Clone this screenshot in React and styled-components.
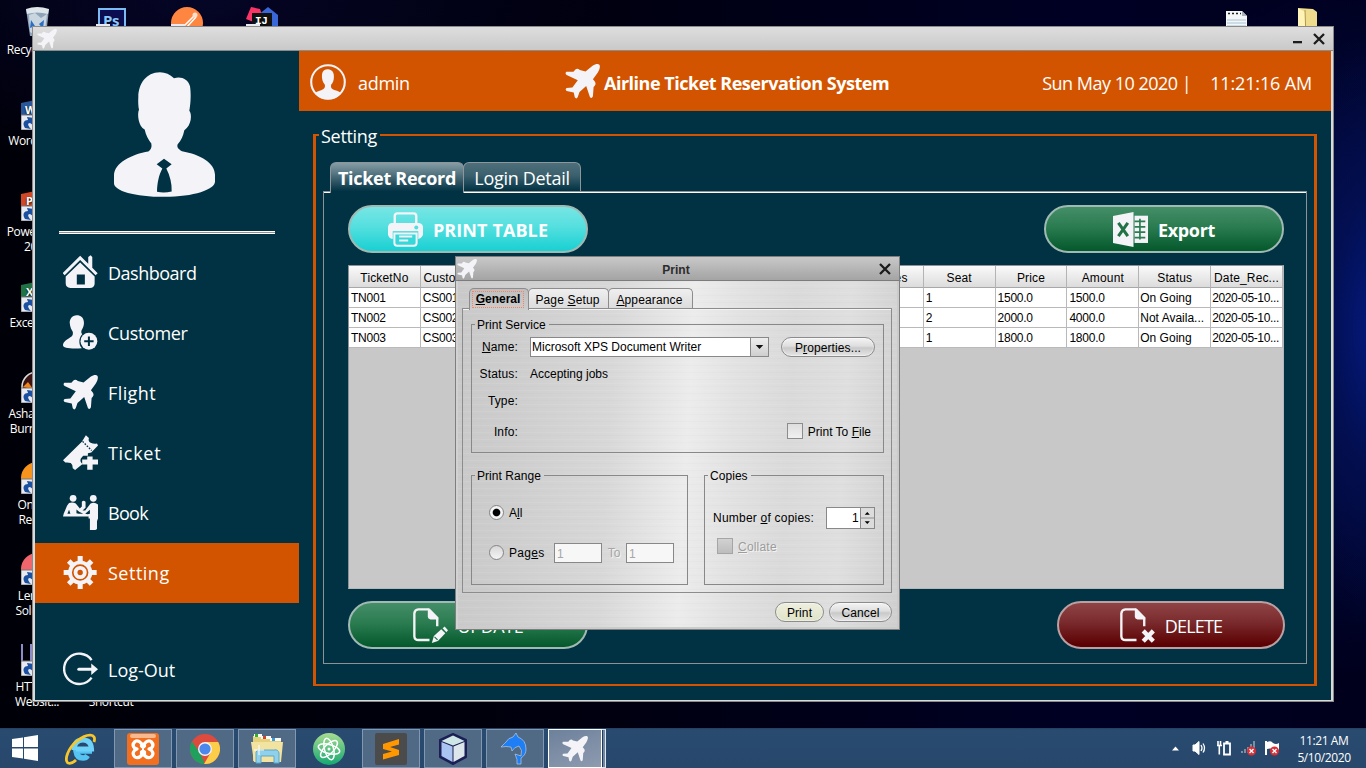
import React from 'react';
import styled, { createGlobalStyle, css } from 'styled-components';

const navy = '#003243';
const orange = '#d35400';
const ink = '#f4f4f8';
const ui = '"Open Sans", "Noto Sans", sans-serif';
const swing = '"Liberation Sans", Arial, sans-serif';

const Global = createGlobalStyle`
  * { box-sizing: border-box; }
  body { margin: 0; overflow: hidden; background: #000; }
  svg { display: block; flex: none; }
`;

/* ---------- desktop ---------- */

const Desktop = styled.main`
  position: relative;
  width: 1366px;
  height: 768px;
  display: flex;
  flex-direction: column;
  justify-content: flex-end;
  overflow: hidden;
  font-family: ${ui};
  background:
    radial-gradient(ellipse 90px 300px at 1372px 330px, #04187a 0%, rgba(3, 18, 90, 0.6) 45%, transparent 100%),
    radial-gradient(ellipse 260px 360px at 1366px 320px, #020e52 0%, transparent 100%),
    radial-gradient(ellipse 420px 170px at 200px 0, #050526 0%, transparent 100%),
    linear-gradient(90deg, #000008 0%, #00000e 40%, #000025 80%, #00001c 100%);
`;

const Shortcut = styled.div`
  position: absolute;
  left: ${p => p.$x}px;
  top: ${p => p.$y}px;
  width: 76px;
  display: flex;
  flex-direction: column;
  align-items: center;
  color: #fff;
  font-size: 12px;
  line-height: 15px;
  letter-spacing: -0.4px;
  text-align: center;
  white-space: pre-line;
  text-shadow: 0 1px 2px #000;
`;

const ShortcutArt = styled.svg`
  width: 32px;
  height: 32px;
  margin-bottom: ${p => p.$gap ?? 3}px;
`;

/* ---------- application window ---------- */

const AppWindow = styled.section`
  position: absolute;
  left: 32px;
  top: 26px;
  width: 1302px;
  height: 676px;
  display: flex;
  flex-direction: column;
  border: 1px solid #8b8b8b;
  background: #dadada;
  padding: 0 2px 2px;
`;

const TitleBar = styled.header`
  height: 24px;
  flex: none;
  box-sizing: content-box;
  height: 23px;
  display: flex;
  align-items: center;
  margin: 0 -2px;
  padding: 0 7px 0 4px;
  border-bottom: 1px solid #8a8a8a;
  background: linear-gradient(#dedede, #c9c9c9);
`;

const TitleControls = styled.div`
  display: flex;
  gap: 10px;
  margin-left: auto;
`;

const WindowBody = styled.div`
  flex: 1;
  display: flex;
  background: ${navy};
`;

const Sidebar = styled.aside`
  width: 264px;
  flex: none;
  display: flex;
  flex-direction: column;
  align-items: center;
`;

const Avatar = styled.svg`
  width: 101px;
  height: 125px;
  margin: 21px 5px 0 0;
`;

const DoubleRule = styled.div`
  width: 216px;
  height: 3px;
  margin: 34px 0 9px;
  background: #8e9194;
  border: solid #fff;
  border-width: 1px 0;
`;

const NavItem = styled.a`
  align-self: stretch;
  height: 60px;
  display: flex;
  align-items: center;
  gap: 10px;
  padding: 0 0 2px 28px;
  color: #fff;
  font-size: 18px;
  letter-spacing: ${p => p.$track}px;
  background: ${p => (p.$active ? orange : 'transparent')};
  margin-top: ${p => (p.$apart ? 37 : 0)}px;

  svg { width: 35px; height: 35px; }
  span { line-height: 24px; padding-top: 2px; }
`;

const Main = styled.div`
  flex: 1;
  min-width: 0;
  display: flex;
  flex-direction: column;
`;

const TopBar = styled.div`
  height: 60px;
  display: grid;
  grid-template-columns: 267px 1fr auto auto;
  align-items: center;
  padding: 3px 19px 0 11px;
  background: ${orange};
  color: #fff;
  font-size: 18px;
`;

const UserBadge = styled.div`
  display: flex;
  align-items: center;
  gap: 12px;
  letter-spacing: -0.3px;
  svg { width: 36px; height: 36px; margin-top: -1px; }
`;

const Brand = styled.div`
  display: flex;
  align-items: center;
  gap: 3px;
  margin-left: -12px;
  font-weight: 700;
  letter-spacing: -0.49px;
  svg { width: 35px; height: 35px; margin: -3px 1px 0 0; }
`;

const Moment = styled.span`
  letter-spacing: ${p => p.$track}px;
  margin-left: ${p => p.$left || 0}px;
`;

const SettingArea = styled.div`
  flex: 1;
  display: flex;
  padding: 12px 14px 14px;
`;

const SettingGroup = styled.fieldset`
  flex: 1;
  min-width: 0;
  display: flex;
  flex-direction: column;
  margin: 0;
  padding: 15px 7px 20px;
  border: solid ${orange};
  border-width: 2px 3px;
  legend {
    margin-left: -4px;
    padding: 0 3px 0 2px;
    height: 24px;
    color: #fff;
    font-size: 18px;
    line-height: 27px;
    letter-spacing: -0.3px;
  }
`;

const TabStrip = styled.div`
  display: flex;
  height: 29px;
  padding-left: 7px;
`;

const MainTab = styled.button`
  width: ${p => p.$w}px;
  height: ${p => (p.$active ? 31 : 29)}px;
  position: relative;
  padding: ${p => (p.$active ? '0 0 1px' : '2px 0 0')};
  border: 1px solid #8f9699;
  border-bottom: 0;
  border-radius: 6px 6px 0 0;
  margin-right: ${p => (p.$active ? -1 : 0)}px;
  color: #fff;
  font: ${p => (p.$active ? 700 : 400)} 18px ${ui};
  letter-spacing: -0.3px;
  white-space: nowrap;
  background: ${p =>
    p.$active
      ? `linear-gradient(#859da5 0%, #5d7c87 30%, #2b5261 65%, ${navy} 95%)`
      : `linear-gradient(#4d6f7b 0%, #3b606d 45%, ${navy} 100%)`};
  z-index: ${p => (p.$active ? 1 : 0)};
`;

const TabPanel = styled.div`
  flex: 1;
  display: flex;
  flex-direction: column;
  gap: 12px;
  padding: 13px 22px 0 24px;
  border: 1px solid #8f9294;
  box-shadow: inset 0 1px #fff;
`;

const ActionRow = styled.div`
  display: flex;
  justify-content: space-between;
  margin-right: ${p => p.$outset || 0}px;
`;

const tones = {
  cyan: 'linear-gradient(#7ae6e5 0%, #55dfdf 45%, #1fd2d4 90%, #18cdd0 100%)',
  green: 'linear-gradient(#47906a 0%, #2b7c51 45%, #085c30 90%, #00532a 100%)',
  red: 'linear-gradient(#924648 0%, #792a2c 45%, #5d0204 90%, #560000 100%)',
};

const PillButton = styled.button`
  width: ${p => p.$w || 240}px;
  height: 48px;
  display: flex;
  align-items: center;
  justify-content: center;
  gap: 10px;
  padding: 0;
  border: 2px solid ${p => (p.$tone === 'red' ? '#b9a0a2' : '#a0b9b3')};
  border-radius: 24px;
  background: ${p => tones[p.$tone]};
  background-origin: border-box;
  color: #fff;
  font: ${p => (p.$bold ? 700 : 400)} 18px ${ui};
  letter-spacing: ${p => p.$track}px;
  svg { width: 35px; height: 35px; }
  span { padding-top: 2px; }
`;

const TableView = styled.div`
  height: 324px;
  background: #c8c8c8;
  border: 1px solid #8f9294;
  border-color: #8f9294 #b5b8b9 #b5b8b9 #8f9294;
`;

const Table = styled.table`
  table-layout: fixed;
  width: 934px;
  border-collapse: separate;
  border-spacing: 0;
  font: 12px ${swing};
  color: #000;

  th {
    height: 22px;
    padding: 2px 0 0;
    font-weight: 400;
    letter-spacing: 0.15px;
    border-right: 1px solid #b4b4b4;
    border-bottom: 1px solid #a8a8a8;
    background: linear-gradient(#fafafa, #dcdcdc);
  }
  td {
    height: 20px;
    padding: 0 0 0 2px;
    overflow: hidden;
    white-space: nowrap;
    letter-spacing: -0.25px;
    background: #fff;
    border-right: 1px solid #b9b9b9;
    border-bottom: 1px solid #b9b9b9;
  }
  td:nth-last-child(2) { letter-spacing: 0; padding-left: 1px; }
  td:last-child { letter-spacing: -0.35px; padding-left: 1px; }
`;

/* ---------- print dialog ---------- */

const Dialog = styled.section`
  position: absolute;
  left: 455px;
  top: 256px;
  width: 445px;
  height: 374px;
  display: flex;
  flex-direction: column;
  border: 1px solid #7e7e7e;
  background:
    repeating-linear-gradient(rgba(255, 255, 255, 0.07) 0 1px, transparent 1px 3px, rgba(0, 0, 0, 0.012) 3px 4px, transparent 4px 7px),
    linear-gradient(93deg, #c9c9c9 0%, #cdcdcd 12%, #d8d8d8 35%, #ececec 52%, #e2e2e2 62%, #dadada 74%, #dfdfdf 86%, #cfcfcf 100%);
  box-shadow: inset 2px 0 #d2d2d2, inset -2px -2px #cbcbcb;
  font: 12px ${swing};
  color: #000;
`;

const DialogTitle = styled.header`
  height: 24px;
  display: grid;
  grid-template-columns: 22px 1fr 18px;
  align-items: center;
  padding: 0 3px 0 1px;
  border-bottom: 1px solid #7c7c7c;
  background: linear-gradient(#c8c8c8, #a4a4a4);
  color: #2c2c2c;
  font-weight: 700;
  text-align: center;
  span { padding: 2px 5px 0 0; }
`;

const DialogTabs = styled.div`
  display: flex;
  align-items: flex-end;
  height: 27px;
  padding: 0 0 0 13px;
`;

const DialogTab = styled.button`
  width: ${p => p.$w}px;
  height: 20px;
  display: grid;
  place-items: center;
  position: relative;
  padding: 2px 2px 0 0;
  border: 1px solid #8c8c8c;
  border-bottom: 0;
  border-radius: 5px 5px 0 0;
  margin-right: -1px;
  white-space: nowrap;
  font: 12px ${swing};
  letter-spacing: 0.15px;
  background: linear-gradient(#efefef, #dcdcdc);
  color: #000;
  ${p =>
    p.$active &&
    css`
      height: 22px;
      margin-bottom: -2px;
      padding: 0 2px 1px 0;
      z-index: 1;
      font-weight: 700;
      letter-spacing: 0;
      background: linear-gradient(#bfbfbf, #cdcdcd);
      span { outline: 1px dotted #ff7f5a; padding: 0 3px; line-height: 15px; }
    `}
`;

const DialogPane = styled.div`
  height: 285px;
  margin: 0 7px 0 6px;
  padding: 8px 7px 0 8px;
  border: 1px solid #8c8c8c;
  box-shadow: inset 0 1px #f4f4f4;
`;

const Group = styled.fieldset`
  width: ${p => p.$w}px;
  height: ${p => p.$h}px;
  margin: 0;
  padding: 0 0 0 3px;
  border: 1px solid #888;
  legend {
    padding: 0 3px 0 2px;
    height: 15px;
    line-height: 16px;
    letter-spacing: 0.05px;
  }
`;

const ServiceGrid = styled.div`
  display: grid;
  grid-template-columns: 43px 239px 1fr;
  grid-template-rows: 20px 20px 20px 22px;
  column-gap: 12px;
  row-gap: 7px;
  align-items: center;
  padding: 5px 8px 0 0;
  > label { justify-self: end; letter-spacing: 0.15px; }
`;

const ServiceSelect = styled.div`
  height: 20px;
  display: flex;
  align-items: center;
  justify-content: space-between;
  padding-left: 1px;
  border: 1px solid #888;
  background: #fff;
  svg { width: 18px; height: 18px; border-left: 1px solid #888; background: linear-gradient(#eee, #cfcfcf); }
`;

const SwingButton = styled.button`
  width: ${p => p.$w}px;
  height: 20px;
  padding: 1px 0 0;
  border: 1px solid #8c8c8c;
  border-radius: 10px;
  font: 12px ${swing};
  letter-spacing: 0.1px;
  color: #000;
  justify-self: end;
  box-shadow: inset 0 0 0 1px rgba(255, 255, 255, 0.4);
  background: ${p =>
    p.$primary ? 'linear-gradient(#eeefdf, #dfe3c8)' : 'linear-gradient(#f4f4f4 0%, #dedede 45%, #c9c9c9 55%, #e6e6e6 100%)'};
`;

const InfoLabel = styled.label`
  padding-top: 6px;
`;

const CheckLine = styled.div`
  display: flex;
  align-items: center;
  gap: 5px;
  color: ${p => (p.$off ? '#9c9c9c' : '#000')};
  text-shadow: ${p => (p.$off ? '1px 1px #f4f4f4' : 'none')};
`;

const FileCheck = styled(CheckLine)`
  grid-column: 2 / 4;
  justify-self: end;
  margin: 4px 4px 0 0;
  span { padding-top: 2px; white-space: pre; }
`;

const Box = styled.i`
  width: 16px;
  height: 16px;
  border: 1px solid ${p => (p.$off ? '#a5a5a5' : '#8c8c8c')};
  background: ${p => (p.$off ? 'linear-gradient(#d2d2d2, #bdbdbd)' : 'linear-gradient(#dedede, #f0f0f0)')};
`;

const GroupRow = styled.div`
  display: flex;
  justify-content: space-between;
  margin-top: 15px;
`;

const RadioLine = styled.div`
  height: 20px;
  display: flex;
  align-items: center;
  margin: ${p => p.$top}px 0 0 14px;
`;

const Radio = styled.i`
  width: 15px;
  height: 15px;
  margin: 0 5px 2px 0;
  border: 1px solid #858585;
  border-radius: 50%;
  background: ${p => (p.$on ? 'radial-gradient(circle, #000 0 3.3px, #f4f4f4 4.3px)' : 'linear-gradient(#d8d8d8, #f4f4f4)')};
`;

const PageField = styled.span`
  width: 48px;
  height: 20px;
  padding: 0 2px;
  border: 1px solid #888;
  background: #f7f7f7;
  color: #a6a6a6;
  line-height: 20px;
`;

const ToLabel = styled.span`
  width: 24px;
  text-align: center;
  color: #a6a6a6;
  text-shadow: 1px 1px #f4f4f4;
`;

const PagesLabel = styled.span`
  width: 45px;
  letter-spacing: 0.3px;
`;

const CopiesLine = styled.div`
  display: flex;
  align-items: center;
  justify-content: space-between;
  margin: 24px 8px 9px 5px;
  letter-spacing: 0.22px;
`;

const Spinner = styled.div`
  width: 49px;
  height: 22px;
  display: flex;
  align-items: center;
  justify-content: flex-end;
  border: 1px solid #888;
  background: #fff;
  svg { width: 14px; height: 20px; margin-left: 1px; border-left: 1px solid #888; background: #dcdcdc; }
`;

const CollateLine = styled(CheckLine)`
  margin-left: 9px;
  letter-spacing: 0.2px;
  span { padding-top: 2px; }
`;

const DialogButtons = styled.div`
  display: flex;
  justify-content: flex-end;
  gap: 5px;
  margin: 4px 1px 0 2px;
  padding: 5px 6px 0 0;
`;

/* ---------- taskbar ---------- */

const Taskbar = styled.footer`
  height: 40px;
  display: flex;
  align-items: center;
  background: linear-gradient(#24405f 0, #294b70 2px, #27486b 100%);
`;

const TaskButton = styled.div`
  width: 58px;
  height: 39px;
  display: grid;
  place-items: center;
  margin: 1px 4px 0 0;
  ${p =>
    p.$open &&
    css`
      border: 1px solid #8197b2;
      background: #506a86;
    `}
  ${p =>
    p.$active &&
    css`
      width: 54px;
      margin-right: 0;
      border: 1px solid #fff;
      background: linear-gradient(160deg, #6d819b, #8e9bb0);
    `}
`;

const StackEdge = styled.div`
  width: 4px;
  height: 39px;
  margin-top: 1px;
  border: 1px solid #dfe5ec;
  border-left-width: 0;
  background: linear-gradient(90deg, #1e3a5a 1px, #7488a2 1px);
`;

const Start = styled.div`
  width: 52px;
  padding-left: 12px;
`;

const Tray = styled.div`
  display: flex;
  align-items: center;
  gap: 8px;
  margin-left: auto;
  padding-right: 15px;
  > :first-child { margin-right: 3px; }
`;

const Clock = styled.div`
  width: 54px;
  margin-left: 9px;
  padding-top: 2px;
  color: #fff;
  font-size: 12px;
  line-height: 17px;
  letter-spacing: -0.4px;
  text-align: center;
  white-space: nowrap;
`;

/* ---------- drawings ---------- */

const Plane = ({ size = 35 }) => (
  <svg width={size} height={size} viewBox="0 0 104 104" fill={ink}>
    <path d="M82 5C90 0 99 -1 102 2C106 6 102 18 97 26L83 45L88 51Q93 57 89 64L85 68L83 96Q79 105 74 98L63 65L43 83L38 98Q34 106 29 99L26 85L5 80Q-1 76 5 71L22 70L38 48L5 33Q-1 28 4 23L25 23L31 16Q38 12 44 18L61 22Z" />
  </svg>
);

const Person = () => (
  <Avatar viewBox="0 0 303 374">
    <path fill={ink} d="M138 0C96 0 73 36 73 74C72 90 73 104 75 113C69 124 73 164 92 172C96 190 103 203 112 214C114 226 111 233 103 238C55 246 0 272 0 310V333C0 356 62 374 151 374C240 374 303 352 303 328V308C303 272 258 246 204 237C192 230 188 224 191 216C202 204 207 192 211 174C234 160 234 124 226 116C231 90 231 60 228 42C221 20 202 12 180 18C168 6 154 0 138 0Z" />
    <path fill={navy} d="M150 260L173 276L157 289C168 310 174 334 173 358Q151 363 129 359C130 332 134 310 145 289L128 276Z" />
  </Avatar>
);

const House = () => (
  <svg viewBox="0 0 104 104" fill={ink}>
    <path d="M51 22L94 64V86Q92 98 80 98H22Q8 97 8 84V64ZM41 58V88H65V58Z" fillRule="evenodd" />
    <path d="M51 2L75 26V6L82 1L87 6V38L103 54L97 60L51 15L5 60L-1 54Z" />
  </svg>
);

const AddUser = () => (
  <svg viewBox="0 0 104 104" fill={ink}>
    <path d="M41 1C26 1 20 13 20 24C21 36 25 44 29 50C31 60 26 65 18 69C8 74 0 82 0 90C0 98 20 101 56 99C46 88 46 68 57 57C53 53 54 48 56 44C61 36 63 28 62 20C61 8 53 1 41 1Z" />
    <circle cx="77" cy="78" r="25" />
    <path d="M77 64V92M63 78H91" stroke={navy} strokeWidth="6" />
  </svg>
);

const TicketAdd = () => (
  <svg viewBox="0 0 104 104" fill={ink}>
    <path d="M68 1L77 9Q74 20 82 23Q92 27 101 25L104 31L84 52L74 54V62H60L53 70Q49 80 58 86L36 104L29 99Q30 88 23 83Q14 81 7 82L0 75L56 20Z" />
    <path d="M58 19L85 46" stroke={navy} strokeWidth="4" strokeDasharray="5 4" />
    <path d="M72 64H88V73H104V88H88V103H72V88H57V73H72Z" />
  </svg>
);

const Desk = () => (
  <svg viewBox="0 0 104 104" fill={ink}>
    <circle cx="30" cy="10" r="10" /><circle cx="90" cy="10" r="10" />
    <path d="M18 24Q28 20 38 25L50 40L56 34V20Q61 14 67 20V38L58 46H66L82 25Q94 20 104 28V70Q102 75 101 78V100Q98 105 90 104H80V70H76V64H0L2 56L12 32ZM18 44L13 56H22ZM40 43V54L46 56H60L48 50ZM80 44L66 56L74 57L80 56Z" fillRule="evenodd" />
  </svg>
);

const Gear = () => (
  <svg viewBox="0 0 104 104">
    <g stroke={ink} strokeWidth="15">
      <path d="M51 3V101M2 52H100M17 18L85 86M17 86L85 18" />
    </g>
    <circle cx="51" cy="52" r="36" fill={ink} />
    <circle cx="51" cy="52" r="22" fill="none" stroke={orange} strokeWidth="5" />
    <circle cx="51" cy="52" r="8" fill={orange} />
  </svg>
);

const Exit = () => (
  <svg viewBox="0 0 104 104" fill="none" stroke={ink}>
    <path d="M85 24A45 45 0 1 0 85 76" strokeWidth="7" />
    <path d="M47 51H90" strokeWidth="9" strokeLinecap="round" />
    <path d="M84 34L104 51L84 68Z" fill={ink} stroke="none" />
  </svg>
);

const UserCircle = () => (
  <svg viewBox="0 0 104 104" fill={ink}>
    <circle cx="52" cy="52" r="48.500" fill="none" stroke={ink} strokeWidth="6" />
    <path d="M52 15C38 14 33 24 35 42C36 52 41 56 43 60C44 68 42 72 34 75Q16 80 14 86Q30 102 52 102Q74 102 90 86Q88 79 70 75C61 72 60 68 61 60C66 54 69 48 69 38C70 24 64 16 52 15Z" />
  </svg>
);

const Printer = () => (
  <svg viewBox="0 0 104 104">
    <path d="M20 36V12Q20 4 28 4H76Q84 4 84 12V36" fill="none" stroke={ink} strokeWidth="7" />
    <path d="M12 33H92Q104 35 104 46V66Q103 76 90 80H14Q1 78 0 66V44Q2 34 12 33Z" fill={ink} />
    <circle cx="84" cy="46" r="6" fill="#50dede" />
    <path d="M14 57H90V82H14Z" fill="#40dadb" />
    <path d="M19 64H85V92Q85 100 77 100H27Q19 100 19 92Z" fill="#36d8d9" stroke={ink} strokeWidth="6" />
    <path d="M33 73H72M33 85H60" stroke={ink} strokeWidth="6" />
  </svg>
);

const Sheet = () => (
  <svg viewBox="0 0 104 104">
    <path d="M0 12L61 0V104L0 92Z" fill={ink} />
    <path d="M16 32L44 72M44 32L16 72" stroke="#217346" strokeWidth="9" />
    <path d="M64 11H104V92H64Z" fill={ink} />
    <path d="M64 28H96M64 44H96M64 60H96M64 76H96M80 20V82" stroke="#2b7c51" strokeWidth="5" />
  </svg>
);

const Doc = ({ children }) => (
  <svg viewBox="0 0 104 104" fill="none" stroke={ink} strokeWidth="7">
    <path d="M49 95H16Q5 95 4 84V16Q5 5 16 4H46L72 30V54" />
    <path d="M44 2H50L75 28V34H52Q44 33 44 26Z" fill={ink} stroke="none" />
    {children}
  </svg>
);

const EditDoc = () => (
  <Doc>
    <path d="M62 83L84 63L96 75L74 98L56 104Z" fill={ink} stroke="none" />
    <path d="M88 60L94 55L104 66L99 72Z" fill={ink} stroke="none" />
    <path d="M64 86L73 95" stroke="#0f6337" strokeWidth="3" />
  </Doc>
);

const DeleteDoc = () => (
  <Doc><path d="M69 68L99 99M99 68L69 99" strokeWidth="13" /></Doc>
);

const Cross = ({ size = 14 }) => (
  <svg width={size} height={size} viewBox="0 0 14 14" fill="none" stroke="#1c1c1c" strokeWidth="2.300"><path d="M2 2L12 12M12 2L2 12" /></svg>
);

const ShortcutArrow = () => (
  <g>
    <path d="M0 17H15V32H0Z" fill="#e8eaf0" stroke="#777" />
    <path d="M4 30C1 25 3 22 7 22L6 19L13 20L12 27L9 25C6 25 7 28 10 31Z" fill="#1b4f9f" />
  </g>
);

/* ---------- data ---------- */

const nav = [
  ['Dashboard', House, -0.5],
  ['Customer', AddUser, -0.35],
  ['Flight', Plane, 0.4],
  ['Ticket', TicketAdd, 0.7],
  ['Book', Desk, -0.7],
  ['Setting', Gear, 0.5],
];

const columns = ['TicketNo', 'CustomerID', '', '', '', '', '', 'Airlines', 'Seat', 'Price', 'Amount', 'Status', 'Date_Rec...'];
const rows = [
  ['TN001', 'CS001', '', '', '', '', '', '', '1', '1500.0', '1500.0', 'On Going', '2020-05-10...'],
  ['TN002', 'CS002', '', '', '', '', '', '', '2', '2000.0', '4000.0', 'Not Availa...', '2020-05-10...'],
  ['TN003', 'CS003', '', '', '', '', '', '', '1', '1800.0', '1800.0', 'On Going', '2020-05-10...'],
];

const DesktopIcons = () => (
  <>
    <Shortcut $x={-2} $y={6}>
      <ShortcutArt viewBox="0 0 32 32" $gap={4}>
        <path d="M6 3L29 3L26 30H10Z" fill="#8fa4b8" />
        <path d="M6 3Q17 -1 29 3L28 8Q17 5 7 8Z" fill="#dfe6ea" />
        <path d="M9 9L15 7L21 12L27 8L25 24L17 30L10 26Z" fill="#c9d5df" />
        <path d="M11 14L15 20L10 22ZM19 18L24 14L23 23Z" fill="#2a6fc4" />
      </ShortcutArt>
      Recycle Bin
    </Shortcut>
    <Shortcut $x={74} $y={7}>
      <ShortcutArt viewBox="0 0 32 32">
        <path d="M3 2H29V30H3Z" fill="#0b0f52" stroke="#7cbcf5" strokeWidth="2" />
        <text x="7" y="19" fontSize="15" fontWeight="700" fontFamily={ui} fill="#8cc8ff">Ps</text>
        <path d="M0 17H14V32H0Z" fill="#e8eaf0" />
      </ShortcutArt>
    </Shortcut>
    <Shortcut $x={149} $y={7}>
      <ShortcutArt viewBox="0 0 32 32">
        <circle cx="16" cy="16" r="16" fill="#ff8641" />
        <path d="M13 19L24 8M15 21L25 10" stroke="#fff" strokeWidth="1.500" />
        <circle cx="24" cy="8" r="2.500" fill="#ffe0cc" />
        <path d="M0 17H14V32H0Z" fill="#e8eaf0" />
      </ShortcutArt>
    </Shortcut>
    <Shortcut $x={224} $y={7}>
      <ShortcutArt viewBox="0 0 32 32">
        <path d="M0 12L5 0L14 2L20 20Z" fill="#fb3468" />
        <path d="M12 8L22 0L32 8V28H14Z" fill="#3967d8" />
        <path d="M6 6H26V26H6Z" fill="#111" />
        <text x="9" y="17" fontSize="11" fontWeight="700" fontFamily="Liberation Mono, monospace" fill="#fff">IJ</text>
        <path d="M0 17H14V32H0Z" fill="#e8eaf0" />
      </ShortcutArt>
    </Shortcut>
    <Shortcut $x={-1} $y={98}>
      <ShortcutArt viewBox="0 0 32 32"><path d="M0 5L24 0V32H0Z" fill="#2b579a" /><text x="4" y="16" fontSize="11" fontWeight="700" fill="#fff">W</text><ShortcutArrow /></ShortcutArt>
      Word 2016
    </Shortcut>
    <Shortcut $x={-1} $y={189}>
      <ShortcutArt viewBox="0 0 32 32"><path d="M0 5L24 0V32H0Z" fill="#d24726" /><text x="5" y="16" fontSize="11" fontWeight="700" fill="#fff">P</text><ShortcutArrow /></ShortcutArt>
      {'PowerPoint\n2016'}
    </Shortcut>
    <Shortcut $x={-1} $y={280}>
      <ShortcutArt viewBox="0 0 32 32"><path d="M0 5L24 0V32H0Z" fill="#217346" /><text x="5" y="16" fontSize="11" fontWeight="700" fill="#fff">X</text><ShortcutArrow /></ShortcutArt>
      Excel 2016
    </Shortcut>
    <Shortcut $x={-1} $y={371}>
      <ShortcutArt viewBox="0 0 32 32"><circle cx="16" cy="16" r="15" fill="#3a1414" stroke="#ddd" strokeWidth="1.500" /><path d="M2 16L7 11L12 18Z" fill="#f08418" /><ShortcutArrow /></ShortcutArt>
      {'Ashampoo\nBurning St'}
    </Shortcut>
    <Shortcut $x={-1} $y={462}>
      <ShortcutArt viewBox="0 0 32 32"><circle cx="16" cy="16" r="16" fill="#f7941d" /><ShortcutArrow /></ShortcutArt>
      {'OnScrn\nRecord'}
    </Shortcut>
    <Shortcut $x={-1} $y={553}>
      <ShortcutArt viewBox="0 0 32 32"><circle cx="16" cy="16" r="16" fill="#f0666c" /><ShortcutArrow /></ShortcutArt>
      {'Lenovo\nSolution'}
    </Shortcut>
    <Shortcut $x={-1} $y={644}>
      <ShortcutArt viewBox="0 0 32 32"><path d="M0 0H2V18H0ZM9 0H11V18H9Z" fill="#8c8cc8" /><ShortcutArrow /></ShortcutArt>
      {'HTTrack\nWebsit...'}
    </Shortcut>
    <Shortcut $x={73} $y={659}>
      <ShortcutArt viewBox="0 0 32 32" />
      Shortcut
    </Shortcut>
    <Shortcut $x={1199} $y={9}>
      <ShortcutArt viewBox="0 0 32 32">
        <path d="M5 2H21L26 7V32H5Z" fill="#f4f6f8" />
        <path d="M21 2V7H26Z" fill="#a9b4bc" />
        <path d="M7 4.500H20" stroke="#222" strokeWidth="1.500" strokeDasharray="2 2" />
        <path d="M6 11H25M6 14H25M6 17H25" stroke="#a5c4d6" />
      </ShortcutArt>
    </Shortcut>
    <Shortcut $x={1271} $y={6}>
      <ShortcutArt viewBox="0 0 32 32">
        <path d="M5 2L20 3L24 6V32H5Z" fill="#efdc8c" />
        <path d="M5 2L12 6V32H5Z" fill="#fff3b8" />
        <path d="M12 4L13 32" stroke="#b09a50" />
      </ShortcutArt>
    </Shortcut>
  </>
);

const PrintDialog = () => (
  <Dialog>
    <DialogTitle>
      <Plane size={20} />
      <span>Print</span>
      <Cross />
    </DialogTitle>
    <DialogTabs>
      <DialogTab $w={60} $active><span><u>G</u>eneral</span></DialogTab>
      <DialogTab $w={81}><span>Page <u>S</u>etup</span></DialogTab>
      <DialogTab $w={85}><span><u>A</u>ppearance</span></DialogTab>
    </DialogTabs>
    <DialogPane>
      <Group $w={413} $h={136}>
        <legend>Print Service</legend>
        <ServiceGrid>
          <label><u>N</u>ame:</label>
          <ServiceSelect>
            Microsoft XPS Document Writer
            <svg viewBox="0 0 18 18"><path d="M5 7H13L9 11Z" fill="#111" /></svg>
          </ServiceSelect>
          <SwingButton $w={94}>P<u>r</u>operties...</SwingButton>
          <label>Status:</label><span>Accepting jobs</span><span />
          <label>Type:</label><span /><span />
          <InfoLabel>Info:</InfoLabel>
          <FileCheck><Box /><span>Print To <u>F</u>ile</span></FileCheck>
        </ServiceGrid>
      </Group>
      <GroupRow>
        <Group $w={217} $h={117}>
          <legend>Print Range</legend>
          <RadioLine $top={20}><Radio $on /><span>A<u>l</u>l</span></RadioLine>
          <RadioLine $top={20}>
            <Radio /><PagesLabel>Pag<u>e</u>s</PagesLabel>
            <PageField>1</PageField><ToLabel>To</ToLabel><PageField>1</PageField>
          </RadioLine>
        </Group>
        <Group $w={180} $h={117}>
          <legend>Copies</legend>
          <CopiesLine>
            <span>Number <u>o</u>f copies:</span>
            <Spinner>
              1
              <svg viewBox="0 0 14 20"><path d="M0 10H14" stroke="#888" /><path d="M4 6.500H9.500L6.750 3.500ZM4 13.500H9.500L6.750 16.500Z" fill="#000" /></svg>
            </Spinner>
          </CopiesLine>
          <CollateLine $off><Box $off /><span><u>C</u>ollate</span></CollateLine>
        </Group>
      </GroupRow>
    </DialogPane>
    <DialogButtons>
      <SwingButton $w={49} $primary>Print</SwingButton>
      <SwingButton $w={63}>Cancel</SwingButton>
    </DialogButtons>
  </Dialog>
);

const TaskbarView = () => (
  <Taskbar>
    <Start>
      <svg width="27" height="26" viewBox="0 0 27 26" fill="#fff"><path d="M0 4L11 2.500V12H0ZM12 2.300L26 0V12H12ZM0 13.500H11V23.500L0 22ZM12 13.500H26V26L12 23.700Z" /></svg>
    </Start>
    <TaskButton>
      <svg width="32" height="32" viewBox="0 0 32 32" fill="none">
        <path d="M27 18H11Q12 25 18 25Q21 25 22.500 22.500" stroke="#56c4f2" strokeWidth="5.500" />
        <path d="M9 17Q9 7 18 7Q26 7 26.500 16H11" stroke="#6fd2f8" strokeWidth="5" />
        <path d="M29 9C32 0 22 0 12 8C3 15-1 27 3 30C6 31 9 29 11 27" stroke="#f7c62b" strokeWidth="2.800" />
      </svg>
    </TaskButton>
    <TaskButton $open>
      <svg width="32" height="32" viewBox="0 0 32 32">
        <rect width="32" height="32" rx="3" fill="#f36f20" /><rect x="3" y="1" width="26" height="4" rx="2" fill="#f9b98c" />
        <path d="M15 16H17M14.500 10.500Q11 6.500 8 8.500Q4.500 12 7.500 15L10 16L7.500 17.500Q4.500 21 8 24Q11 26 14.500 22.500V19Q16 17 17.500 19V22.500Q21 26 24 24Q27.500 21 24.500 17.500L22 16L24.500 15Q27.500 12 24 8.500Q21 6.500 17.500 10.500V13Q16 15 14.500 13Z" fill="none" stroke="#fff" strokeWidth="3.200" strokeLinejoin="round" />
      </svg>
    </TaskButton>
    <TaskButton $open>
      <svg width="30" height="30" viewBox="0 0 30 30">
        <circle cx="15" cy="15" r="15" fill="#dd4b3e" />
        <path d="M2 7.500L10 19L15 30A15 15 0 0 1 2 7.500Z" fill="#1fa15d" />
        <path d="M15 8H28.200A15 15 0 0 1 14 30L21 18Z" fill="#fccd48" />
        <circle cx="15" cy="15" r="7" fill="#f2f2f2" /><circle cx="15" cy="15" r="5.600" fill="#4a88ee" />
      </svg>
    </TaskButton>
    <TaskButton $open>
      <svg width="34" height="32" viewBox="0 0 34 32">
        <path d="M3 3H13L15 6H31V28H3Z" fill="#e5d07b" />
        <path d="M4 1H12V4H4ZM11 3H21V6H11ZM20 5H31V8H20Z" fill="#fafafa" />
        <path d="M5 1H8V4H5Z" fill="#2bb32b" /><path d="M13 3H16V6H13Z" fill="#d3452b" /><path d="M22 5H25V8H22Z" fill="#3b9be0" />
        <path d="M1 9H33L31 29H4Z" fill="#f3e3a0" />
        <path d="M6 30V19Q7 16 11 17H24Q28 16 29 20V30H24V23H11V30Z" fill="#8fd0ea" stroke="#5aa8cc" />
        <path d="M9 12V22M4 17H14" stroke="#fff" />
      </svg>
    </TaskButton>
    <TaskButton>
      <svg width="32" height="32" viewBox="0 0 32 32">
        <defs><linearGradient id="atom" x2="0" y2="1"><stop stopColor="#a8dc90" /><stop offset="1" stopColor="#14a873" /></linearGradient></defs>
        <circle cx="16" cy="16" r="16" fill="url(#atom)" />
        <g fill="none" stroke="#fff" strokeWidth="1.500">
          <ellipse cx="16" cy="16" rx="11" ry="4.500" transform="rotate(15 16 16)" /><ellipse cx="16" cy="16" rx="11" ry="4.500" transform="rotate(75 16 16)" /><ellipse cx="16" cy="16" rx="11" ry="4.500" transform="rotate(135 16 16)" />
        </g>
        <circle cx="16" cy="16" r="1.500" fill="#fff" />
      </svg>
    </TaskButton>
    <TaskButton $open>
      <svg width="32" height="32" viewBox="0 0 32 32"><rect width="32" height="32" rx="2" fill="#4b4b4b" /><path d="M8 11L24 6V11.500L15 14L24 17V22L8 26.500V21L17 18.500L8 16Z" fill="#ff9800" /></svg>
    </TaskButton>
    <TaskButton $open>
      <svg width="32" height="32" viewBox="0 0 32 32">
        <path d="M16 1L29 7V24L16 31L3 24V7Z" fill="#1b1f55" stroke="#1b1f55" strokeWidth="2" strokeLinejoin="round" />
        <path d="M16 2.500L27.500 8L16 12.500L4.500 8Z" fill="#cfe6e6" /><path d="M4.500 9L15.500 13.500V29L4.500 23Z" fill="#a9c4f0" /><path d="M27.500 9L16.500 13.500V29L27.500 23Z" fill="#dde6ea" />
      </svg>
    </TaskButton>
    <TaskButton $open>
      <svg width="30" height="32" viewBox="0 0 30 32"><path d="M1 14Q5 10 6 9Q8 5 13 4L16 0L18 4Q26 7 26 16Q26 22 21 25L21 31L17 31Q18 27 15 21L21 23Q23 17 19 13Q14 14 12 18L11 14Q6 13 1 14Z" fill="#1e7ef5" stroke="#b9cbe0" strokeWidth=".7" /></svg>
    </TaskButton>
    <TaskButton $active><Plane size={26} /></TaskButton>
    <StackEdge />
    <Tray>
      <svg width="9" height="5" viewBox="0 0 9 5"><path d="M1 4.500L4.500 .5L8 4.500Z" fill="#fff" /></svg>
      <svg width="17" height="16" viewBox="0 0 17 16" fill="none" stroke="#fff"><path d="M4 5L8 1.500V14.500L4 11H2V5Z" fill="#fff" /><path d="M10 5Q12 8 10 11M12 3.500Q15 8 12 12.500" strokeWidth="1.300" /></svg>
      <svg width="16" height="16" viewBox="0 0 16 16" fill="none" stroke="#fff"><path d="M8 3.500H14V14.500H8ZM9.500 2H12.500M8 4V14" strokeWidth="1.800" /><path d="M2 1V5M4.500 1V5M1 5.500H6M3.300 6V14.500" strokeWidth="1.600" /></svg>
      <svg width="16" height="16" viewBox="0 0 16 16"><path d="M1 11H3V13H1ZM4 9H6V13H4ZM7 7H9V13H7ZM10 4H12V13H10ZM13 1H15V13H13Z" fill="#7d8fa3" /><circle cx="11.500" cy="11" r="4.500" fill="#dc2f35" /><path d="M9.500 9L13.500 13M13.500 9L9.500 13" stroke="#fff" strokeWidth="1.400" /></svg>
      <svg width="16" height="16" viewBox="0 0 16 16"><path d="M1 1H3V15H1ZM3 2Q7 0 9 3Q12 5 15 3V10Q12 11 9 9Q6 8 3 9Z" fill="#fff" /><circle cx="10.500" cy="11" r="4.500" fill="#dc2f35" /><path d="M8.500 9L12.500 13M12.500 9L8.500 13" stroke="#fff" strokeWidth="1.400" /></svg>
      <Clock>11:21 AM<br />5/10/2020</Clock>
    </Tray>
  </Taskbar>
);

export default function App() {
  return (
    <Desktop>
      <Global />
      <DesktopIcons />
      <AppWindow>
        <TitleBar>
          <Plane size={20} />
          <TitleControls>
            <svg width="9" height="14" viewBox="0 0 9 14"><path d="M0 9H9V11.300H0Z" fill="#1c1c1c" /></svg>
            <Cross />
          </TitleControls>
        </TitleBar>
        <WindowBody>
          <Sidebar>
            <Person />
            <DoubleRule />
            {nav.map(([label, Icon, track]) => (
              <NavItem key={label} $track={track} $active={label === 'Setting'}><Icon /><span>{label}</span></NavItem>
            ))}
            <NavItem $apart $track={0}><Exit /><span>Log-Out</span></NavItem>
          </Sidebar>
          <Main>
            <TopBar>
              <UserBadge><UserCircle /><span>admin</span></UserBadge>
              <Brand><Plane /><span>Airline Ticket Reservation System</span></Brand>
              <Moment $track={-0.5}>Sun May 10 2020 |</Moment>
              <Moment $track={-0.15} $left={19}>11:21:16 AM</Moment>
            </TopBar>
            <SettingArea>
              <SettingGroup>
                <legend>Setting</legend>
                <TabStrip>
                  <MainTab $w={134} $active>Ticket Record</MainTab>
                  <MainTab $w={118}>Login Detail</MainTab>
                </TabStrip>
                <TabPanel>
                  <ActionRow>
                    <PillButton $tone="cyan" $bold $track={0.1}><Printer /><span>PRINT TABLE</span></PillButton>
                    <PillButton $tone="green" $bold $track={-0.35}><Sheet /><span>Export</span></PillButton>
                  </ActionRow>
                  <TableView>
                    <Table>
                      <thead><tr>{columns.map((c, i) => <th key={i}>{c}</th>)}</tr></thead>
                      <tbody>
                        {rows.map(r => <tr key={r[0]}>{r.map((cell, i) => <td key={i}>{cell}</td>)}</tr>)}
                      </tbody>
                    </Table>
                  </TableView>
                  <ActionRow $outset={-1}>
                    <PillButton $tone="green" $track={-0.4}><EditDoc /><span>UPDATE</span></PillButton>
                    <PillButton $tone="red" $w={228} $track={-0.8}><DeleteDoc /><span>DELETE</span></PillButton>
                  </ActionRow>
                </TabPanel>
              </SettingGroup>
            </SettingArea>
          </Main>
        </WindowBody>
      </AppWindow>
      <PrintDialog />
      <TaskbarView />
    </Desktop>
  );
}
